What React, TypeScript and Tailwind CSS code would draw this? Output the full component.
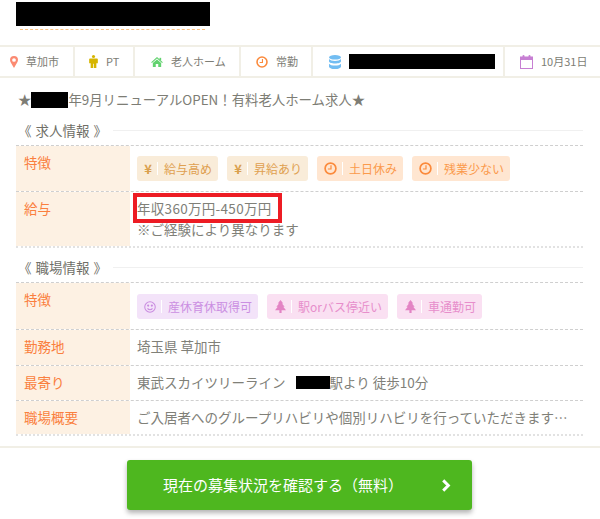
import React from "react";

const font = { fontFamily: '"Noto Sans CJK JP", "Noto Sans", sans-serif' };

function Pin() {
  return (
    <svg width="8" height="12" viewBox="0 0 12 18" fill="none">
      <path d="M6 18C3.500 13 0 9.500 0 6a6 6 0 0 1 12 0c0 3.500-3.500 7-6 12Z" fill="#fb8a72" />
      <circle cx="6" cy="6" r="2.800" fill="#fff" />
    </svg>
  );
}
function Person() {
  return (
    <svg width="9" height="13" viewBox="0 0 10 15">
      <circle cx="5" cy="1.800" r="1.800" fill="#d6b500" />
      <path d="M1 4h8a1 1 0 0 1 1 1v4.500H8.300V15H5.400V10H4.600v5H1.700V9.500H0V5a1 1 0 0 1 1-1Z" fill="#d6b500" />
    </svg>
  );
}
function Home() {
  return (
    <svg width="12" height="10" viewBox="0 0 14 12">
      <path d="M7 0 14 6.200l-.9 1L7 1.900.9 7.200l-.9-1L7 0Z" fill="#62d26f" />
      <path d="M7 3 12 7.300V12H8.500V8.500h-3V12H2V7.300L7 3Z" fill="#62d26f" />
      <rect x="10" y="1" width="2" height="3" fill="#62d26f" />
    </svg>
  );
}
function Clock({ size = 12 }: { size?: number }) {
  return (
    <svg width={size} height={size} viewBox="0 0 13 13" fill="none" stroke="#fb8a3c">
      <circle cx="6.500" cy="6.500" r="5.400" strokeWidth="1.700" />
      <path d="M7 3.200v3.800H3.900" strokeWidth="1.200" />
    </svg>
  );
}
function Database() {
  return (
    <svg width="12" height="14" viewBox="0 0 12 14" fill="#72bdf2">
      <ellipse cx="6" cy="2.300" rx="6" ry="2.300" />
      <path d="M0 4c1 1.300 3.300 1.900 6 1.900S11 5.300 12 4v2.200C12 7.500 9.300 8.500 6 8.500S0 7.500 0 6.200V4Z" />
      <path d="M0 8.700c1 1.300 3.300 1.900 6 1.900s5-.6 6-1.900v2.700C12 12.800 9.300 14 6 14s-6-1.200-6-2.600V8.700Z" />
    </svg>
  );
}
function Calendar() {
  return (
    <svg width="13" height="14" viewBox="0 0 13 14" fill="none">
      <rect x="0.500" y="2" width="12" height="11.500" stroke="#c77fd3" />
      <rect x="0.500" y="2" width="12" height="3" fill="#c77fd3" />
      <rect x="2.500" y="0" width="2" height="3.500" rx="1" fill="#c77fd3" />
      <rect x="8.500" y="0" width="2" height="3.500" rx="1" fill="#c77fd3" />
    </svg>
  );
}
function Smile() {
  return (
    <svg width="12" height="12" viewBox="0 0 13 13" fill="none" stroke="#c98be0" strokeWidth="1.100">
      <circle cx="6.500" cy="6.500" r="5.700" />
      <circle cx="4.500" cy="5" r=".6" fill="#c98be0" />
      <circle cx="8.500" cy="5" r=".6" fill="#c98be0" />
      <path d="M3.800 8c.7 1 1.600 1.400 2.700 1.400S8.500 9 9.200 8" />
    </svg>
  );
}
function Tree() {
  return (
    <svg className="ml-px" width="11" height="13" viewBox="0 0 12 14" fill="#e384c4">
      <path d="M6 0 9 3.800H7.600L10.500 7.200H9L12 11H7.200v3H4.800v-3H0l3-3.800H1.500l2.900-3.400H3L6 0Z" />
    </svg>
  );
}
function Chevron() {
  return (
    <svg className="block" width="10" height="13" viewBox="0 0 10 14" fill="none" stroke="#fff" strokeWidth="3.200">
      <path d="M2 1.500 7.500 7 2 12.500" />
    </svg>
  );
}

function InfoCell({ icon, children, className }: { icon: React.ReactNode; children: React.ReactNode; className: string }) {
  return (
    <div className={`flex h-full items-center gap-[8px] border-r-2 border-[#f1efe6] ${className}`}>
      {icon}
      <span className="text-[11px] text-[#7d7d75]">{children}</span>
    </div>
  );
}

function Tag({ icon, label, className }: { icon: React.ReactNode; label: string; className: string }) {
  return (
    <div className={`flex h-[25px] items-center rounded-[3px] pl-[7px] pr-[6px] text-xs ${className}`}>
      {icon}
      <span className="ml-[5px] mr-[6px] h-[13px] w-px bg-white" />
      <span>{label}</span>
    </div>
  );
}

function Row({ label, children, className }: { label: string; children: React.ReactNode; className: string }) {
  return (
    <div className={`flex ${className}`}>
      <div className="w-[114px] shrink-0 bg-[#fdf1e3] pl-2 pt-[6px] text-[13.5px] leading-[20px] text-[#fa7f3e]">{label}</div>
      <div className="min-w-0 flex-1 pl-[7px] text-[13.5px] leading-[20px] text-[#808078]">{children}</div>
    </div>
  );
}

function Heading({ children }: { children: string }) {
  return (
    <div className="ml-[18px] mr-[17px] flex h-[20px] items-center text-[13.5px] text-[#6f6f68] [word-spacing:1px]">
      <span className="w-[95px] shrink-0">{children}</span>
      <span className="h-px flex-1 bg-[#f0f0f0]" />
    </div>
  );
}

const Black = ({ className }: { className: string }) => <span className={`block bg-black ${className}`} />;

const dashed = "border-b border-dashed border-[#cfcfcf]";
const dotted = "border-b-2 border-dotted border-[#e2e2e2]";

export default function App() {
  const money = <span className="w-[8px] text-center text-[13px] font-bold leading-none text-[#d9a04e]">¥</span>;
  return (
    <div className="relative h-[519px] w-[600px] overflow-hidden bg-white" style={font}>
      <div className="pl-4 pt-[2px]">
        <div className="h-[24px] w-[194px] bg-black" />
        <div className="ml-1 mt-[3px] w-[185px] border-b border-dashed border-[#fbc07f]" />
      </div>

      <div className="mt-[15px] flex h-[33px] items-center border-y-2 border-[#f1efe6]">
        <InfoCell icon={<Pin />} className="w-[75px] pl-[10px]">草加市</InfoCell>
        <InfoCell icon={<Person />} className="w-[60px] pl-[14px]">PT</InfoCell>
        <InfoCell icon={<Home />} className="w-[106px] pl-[16px]">老人ホーム</InfoCell>
        <InfoCell icon={<Clock />} className="w-[72px] pl-[15px]">常勤</InfoCell>
        <InfoCell icon={<Database />} className="w-[192px] pl-[16px]"><Black className="h-[15px] w-[146px]" /></InfoCell>
        <div className="flex h-full flex-1 items-center gap-[8px] pl-[15px]">
          <Calendar />
          <span className="text-[11px] text-[#7d7d75]">10月31日</span>
        </div>
      </div>

      <div className="mt-[11px] flex h-[21px] items-center pl-[18px] text-[13.4px] text-[#7d7d75]">
        <span>★</span>
        <Black className="h-[16px] w-[37px]" />
        <span>年9月リニューアルOPEN！有料老人ホーム求人★</span>
      </div>

      <div className="mt-[10px]"><Heading>《 求人情報 》</Heading></div>

      <div className="ml-4 mr-[17px] mt-[5px] border-t border-dashed border-[#cfcfcf]">
        <Row label="特徴" className={`h-[46px] ${dashed}`}>
          <div className="flex gap-[9px] pt-[10px]">
            <Tag icon={money} label="給与高め" className="bg-[#f9ecd9] text-[#dfa050]" />
            <Tag icon={money} label="昇給あり" className="bg-[#f9ecd9] text-[#dfa050]" />
            <Tag icon={<Clock size={13} />} label="土日休み" className="bg-[#ffe6d1] text-[#fb9a4c]" />
            <Tag icon={<Clock size={13} />} label="残業少ない" className="bg-[#ffe6d1] text-[#fb9a4c]" />
          </div>
        </Row>
        <Row label="給与" className={`h-[56px] ${dotted}`}>
          <div className="pt-[6px] leading-[21px]">
            <span className="tracking-[0.3px]">年収360万円-450万円</span><br />※ご経験により異なります
          </div>
        </Row>
      </div>

      <div className="mt-[9px]"><Heading>《 職場情報 》</Heading></div>

      <div className="ml-4 mr-[17px] mt-[5px] border-t border-dashed border-[#cfcfcf]">
        <Row label="特徴" className={`h-[47px] ${dashed}`}>
          <div className="flex gap-[9px] pt-[11px]">
            <Tag icon={<Smile />} label="産休育休取得可" className="bg-[#f3e3f9] text-[#cb8fe2]" />
            <Tag icon={<Tree />} label="駅orバス停近い" className="bg-[#fae0f2] text-[#e78ecb]" />
            <Tag icon={<Tree />} label="車通勤可" className="bg-[#fae0f2] text-[#e78ecb]" />
          </div>
        </Row>
        <Row label="勤務地" className={`h-[36px] ${dashed}`}><div className="pt-[6px]">埼玉県 草加市</div></Row>
        <Row label="最寄り" className={`h-[35px] ${dashed}`}>
          <div className="flex items-center pt-[6px]">東武スカイツリーライン<Black className="ml-[10px] h-[13px] w-[34px]" /><span>駅より 徒歩10分</span></div>
        </Row>
        <Row label="職場概要" className={`h-[35px] ${dotted}`}>
          <div className="truncate pt-[6px]">ご入居者へのグループリハビリや個別リハビリを行っていただきます…</div>
        </Row>
      </div>

      <div className="mt-[10px] border-t-2 border-[#f1efe6] pt-[12px]">
        <div className="relative ml-[127px] flex h-[50px] w-[345px] items-center rounded-[3px] bg-[#4eb71f] pl-[36px] text-[15px] text-white shadow-[0_3px_5px_rgba(0,0,0,0.3)]">
          現在の募集状況を確認する（無料）
          <span className="absolute right-[21px] top-[19px]"><Chevron /></span>
        </div>
      </div>

      <div className="absolute left-[133px] top-[193px] h-[30px] w-[149px] border-4 border-[#ed1c24]" />
    </div>
  );
}
